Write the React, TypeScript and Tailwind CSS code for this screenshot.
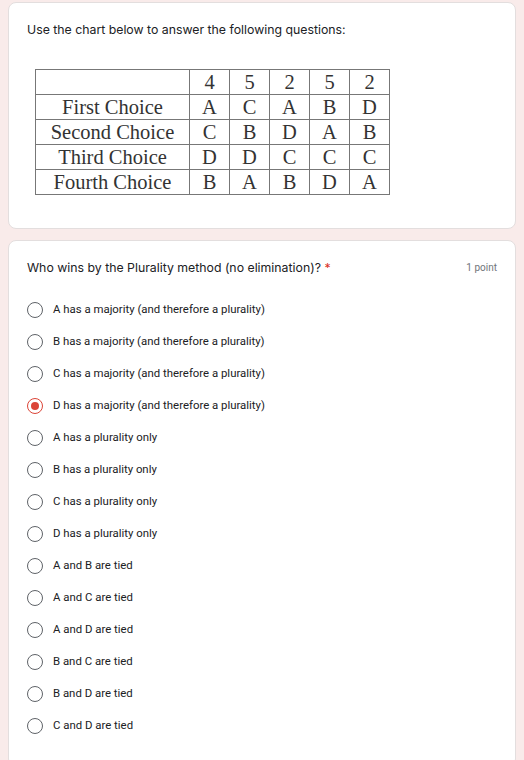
import React from "react";

const header = ["4", "5", "2", "5", "2"];
const rows: [string, string[]][] = [
  ["First Choice", ["A", "C", "A", "B", "D"]],
  ["Second Choice", ["C", "B", "D", "A", "B"]],
  ["Third Choice", ["D", "D", "C", "C", "C"]],
  ["Fourth Choice", ["B", "A", "B", "D", "A"]],
];

const options = [
  "A has a majority (and therefore a plurality)",
  "B has a majority (and therefore a plurality)",
  "C has a majority (and therefore a plurality)",
  "D has a majority (and therefore a plurality)",
  "A has a plurality only",
  "B has a plurality only",
  "C has a plurality only",
  "D has a plurality only",
  "A and B are tied",
  "A and C are tied",
  "A and D are tied",
  "B and C are tied",
  "B and D are tied",
  "C and D are tied",
];

const selected = 3;

export default function App() {
  return (
    <div className="min-h-[760px] bg-[#f9ebea] px-2 pt-[2px] flex flex-col gap-[11px]">
      {/* Chart card */}
      <div className="h-[227px] rounded-lg border border-[#e3dede] bg-white px-[18px] pt-[17px]">
        <p className="text-[12.3px] leading-5 text-[#202124] font-['Inter',sans-serif]">
          Use the chart below to answer the following questions:
        </p>
        <table className="mt-[29px] ml-2 border-collapse border border-[#666] font-['Liberation_Serif',serif] text-[20.5px] text-[#333]">
          <tbody>
            <tr className="h-[25px]">
              <td className="w-[154px] border border-[#777] p-0"></td>
              {header.map((h, i) => (
                <td key={i} className="w-[40px] border border-[#777] p-0 text-center leading-none">
                  {h}
                </td>
              ))}
            </tr>
            {rows.map(([label, cells]) => (
              <tr key={label} className="h-[25px]">
                <td className="border border-[#777] p-0 text-center leading-none">{label}</td>
                {cells.map((c, i) => (
                  <td key={i} className="border border-[#777] p-0 text-center leading-none">
                    {c}
                  </td>
                ))}
              </tr>
            ))}
          </tbody>
        </table>
      </div>

      {/* Question card */}
      <div className="flex-1 rounded-lg border border-[#e3dede] bg-white px-[18px] pt-[17px] pb-6">
        <div className="flex items-start justify-between">
          <p className="text-[12.3px] leading-5 text-[#202124] font-['Inter',sans-serif]">
            Who wins by the Plurality method (no elimination)? <span className="text-[#d93025]">*</span>
          </p>
          <span className="text-[10px] leading-5 text-[#70757a] font-['Roboto',sans-serif]">1 point</span>
        </div>
        <div className="mt-4 flex flex-col">
          {options.map((o, i) => (
            <label key={o} className="flex h-8 items-center gap-[10px]">
              {i === selected ? (
                <span className="flex h-4 w-4 items-center justify-center rounded-full border-[1.5px] border-[#db4437]">
                  <span className="h-2 w-2 rounded-full bg-[#db4437]"></span>
                </span>
              ) : (
                <span className="h-4 w-4 rounded-full border-[1.5px] border-[#5f6368]"></span>
              )}
              <span className="text-[11.4px] text-[#202124] font-['Roboto',sans-serif]">{o}</span>
            </label>
          ))}
        </div>
      </div>
    </div>
  );
}
